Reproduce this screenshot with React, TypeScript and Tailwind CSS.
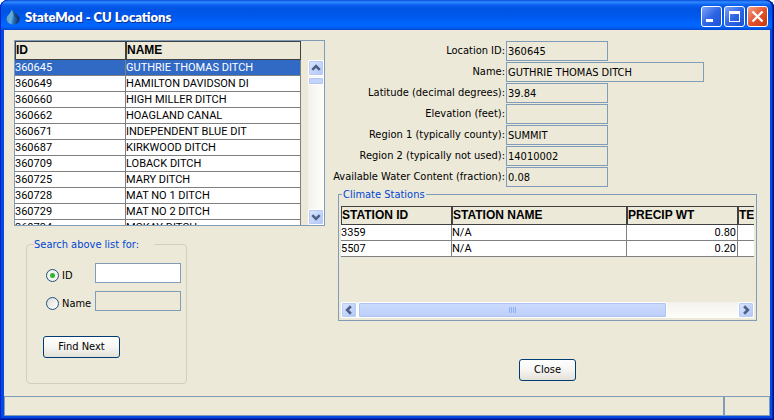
import React from "react";

const locations = [
  ["360645", "GUTHRIE THOMAS DITCH"],
  ["360649", "HAMILTON DAVIDSON DI"],
  ["360660", "HIGH MILLER DITCH"],
  ["360662", "HOAGLAND CANAL"],
  ["360671", "INDEPENDENT BLUE DIT"],
  ["360687", "KIRKWOOD DITCH"],
  ["360709", "LOBACK DITCH"],
  ["360725", "MARY DITCH"],
  ["360728", "MAT NO 1 DITCH"],
  ["360729", "MAT NO 2 DITCH"],
  ["360734", "MCKAY DITCH"],
];

const fields = [
  { id: "location-id", label: "Location ID:", value: "360645", width: "w-[102px]" },
  { id: "name", label: "Name:", value: "GUTHRIE THOMAS DITCH", width: "w-[198px]" },
  { id: "latitude", label: "Latitude (decimal degrees):", value: "39.84", width: "w-[102px]" },
  { id: "elevation", label: "Elevation (feet):", value: "", width: "w-[102px]" },
  { id: "region1", label: "Region 1 (typically county):", value: "SUMMIT", width: "w-[102px]" },
  { id: "region2", label: "Region 2 (typically not used):", value: "14010002", width: "w-[102px]" },
  { id: "awc", label: "Available Water Content (fraction):", value: "0.08", width: "w-[102px]" },
];

const stations = [
  ["3359", "N/A", "0.80"],
  ["5507", "N/A", "0.20"],
];

const arrowPaths = {
  up: "M3.500 9.500 7.500 5.500 11.500 9.500",
  down: "M3.500 5.500 7.500 9.500 11.500 5.500",
  left: "M9.500 3.500 5.500 7.500 9.500 11.500",
  right: "M5.500 3.500 9.500 7.500 5.500 11.500",
};

function ScrollButton({ direction }: { direction: keyof typeof arrowPaths }) {
  return (
    <button
      type="button"
      aria-label={"Scroll " + direction}
      className="size-4 shrink-0 rounded-xs border border-white bg-linear-to-br from-[#dbe5fe] to-[#b0c6f8] shadow-[inset_0_0_0_1px_#b9cbf3]"
    >
      <svg viewBox="0 0 15 15" className="size-[14px]" fill="none" stroke="#4d6185" strokeWidth="2.8">
        <path d={arrowPaths[direction]} />
      </svg>
    </button>
  );
}

function CaptionButton({ label, close, children }: { label: string; close?: boolean; children: React.ReactNode }) {
  return (
    <button
      type="button"
      aria-label={label}
      className={
        "size-[21px] rounded-[3px] border border-white " +
        (close
          ? "bg-linear-to-br from-[#f0a088] via-[#e2532c] to-[#c8360c]"
          : "bg-linear-to-br from-[#7fa2f5] via-[#2f66e6] to-[#1a50d8]")
      }
    >
      <svg viewBox="0 0 19 19" className="size-[19px]" shapeRendering={close ? "auto" : "crispEdges"}>
        {children}
      </svg>
    </button>
  );
}

function PushButton({ className, children }: { className: string; children: React.ReactNode }) {
  return (
    <button
      type="button"
      className={
        "h-[22px] rounded-[3px] border border-[#003c74] bg-linear-to-b from-white via-[#f6f5f1] to-[#e4e1d8] pb-px shadow-[0_0_1px_#ffffff] " +
        className
      }
    >
      {children}
    </button>
  );
}

function HeaderCell({ className, children }: { className?: string; children: React.ReactNode }) {
  return (
    <th
      className={
        "h-[19px] overflow-hidden border border-[#404040] p-0 text-left text-[12px] leading-[17px] font-bold whitespace-nowrap " +
        (className ?? "")
      }
    >
      {children}
    </th>
  );
}

const cell = "h-4 overflow-hidden border-b border-[#808080] p-0 font-['Roboto',sans-serif] text-[11px] leading-[15px] whitespace-nowrap ";
const field = "h-5 border border-[#7f9db9] px-px text-[11px] outline-none ";
const radio =
  "mb-px size-[13px] appearance-none rounded-full border border-[#21507f] bg-linear-to-br from-[#dcdcd7] to-white checked:bg-[radial-gradient(circle,#2fb52f_0_2px,#f2f2ef_3px)]";

export default function App() {
  return (
    <div className="bg-white">
      <div className="flex min-h-screen flex-col rounded-t-lg bg-[#0549e3] font-['DejaVu_Sans_Condensed','DejaVu_Sans',sans-serif] text-[11px] leading-[15px] text-black shadow-[inset_1px_0_#0022cc,inset_-1px_-1px_#00138c,inset_-2px_-2px_#0028b8]">
        <header className="flex h-[30px] shrink-0 items-center gap-[5px] rounded-t-lg bg-[linear-gradient(to_bottom,#0a48d8_0,#2f8cff_2px,#0a5fee_5px,#0054e3_9px,#0058ec_16px,#0066ff_24px,#0064fb_27px,#0046d0_30px)] pt-[3px] pr-[6px] pl-[6px] shadow-[inset_-1px_0_#00138c,inset_-2px_0_#0028b8,inset_1px_0_#0022cc]">
          <svg viewBox="0 0 14 16" className="h-4 w-[14px]">
            <defs>
              <linearGradient id="drop" x1="0" y1="0.3" x2="1" y2="0.5">
                <stop offset="0" stopColor="#6f93b8" />
                <stop offset="0.4" stopColor="#5fb4e4" />
                <stop offset="0.6" stopColor="#2874b8" />
                <stop offset="1" stopColor="#0a2c66" />
              </linearGradient>
            </defs>
            <path d="M5.500 0.500C7 3 13.500 5.500 13.500 10C13.500 13.500 11 15.500 7.500 15.500C3.500 15.500 0.500 13 0.500 9.500C0.500 6.500 5.500 4 5.500 0.500Z" fill="url(#drop)" />
            <path d="M5.500 0.500C7 3 13.500 5.500 13.500 10L9 8Z" fill="#15305e" opacity="0.6" />
          </svg>
          <h1 className="flex-1 font-['Lato','Noto_Sans',sans-serif] text-[13px] leading-4 font-extrabold text-white [text-shadow:1px_1px_#0a2f90]">
            StateMod - CU Locations
          </h1>
          <div className="flex gap-[2px]">
            <CaptionButton label="Minimize">
              <path d="M4 12h7v3H4z" fill="#fff" />
            </CaptionButton>
            <CaptionButton label="Maximize">
              <path d="M4 4h11v11H4zM5 7v7h9V7z" fill="#fff" fillRule="evenodd" />
            </CaptionButton>
            <CaptionButton label="Close window" close>
              <path d="M4.500 4.500l10 10M14.500 4.500l-10 10" stroke="#fff" strokeWidth="2.4" />
            </CaptionButton>
          </div>
        </header>

        <div className="mx-1 mb-1 flex flex-1 flex-col bg-[#ece9d8]">
          <main className="flex flex-1 gap-[9px] pt-[10px] pr-[13px] pb-3 pl-[10px]">
            <section className="w-[311px] shrink-0">
              <div className="flex h-[186px] justify-between overflow-hidden border border-[#7f9db9]">
                <div className="overflow-hidden">
                  <table className="w-[286px] table-fixed border-separate border-spacing-0 font-['Liberation_Sans',Arial,sans-serif]">
                    <thead>
                      <tr>
                        <HeaderCell className="w-[111px]">ID</HeaderCell>
                        <HeaderCell>NAME</HeaderCell>
                      </tr>
                    </thead>
                    <tbody>
                      {locations.map(([id, name], i) => (
                        <tr key={id} className={i === 0 ? "bg-[#316ac5] text-white" : "bg-white"}>
                          <td className={cell + "border-r"}>{id}</td>
                          <td className={cell + "border-r"}>{name}</td>
                        </tr>
                      ))}
                    </tbody>
                  </table>
                </div>
                <div className="mt-[19px] flex w-4 flex-col bg-linear-to-r from-[#f3f1ec] to-[#fefefb]">
                  <ScrollButton direction="up" />
                  <div className="mt-px h-2 rounded-xs border border-white bg-[#c4d4fc] shadow-[inset_0_0_0_1px_#b0c4f4]" />
                  <div className="flex-1" />
                  <ScrollButton direction="down" />
                </div>
              </div>

              <fieldset className="mt-[11px] ml-3 h-[147px] w-[161px] rounded border border-[#d0d0bf] pr-[5px] pl-4">
                <legend className="-ml-[9px] h-[15px] w-[120px] text-[#0046d5]">Search above list for:</legend>
                <div className="mt-[11px] flex items-end pl-[3px]">
                  <input type="radio" id="by-id" name="search-by" defaultChecked className={radio} />
                  <label htmlFor="by-id" className="w-9 pl-[3px]">ID</label>
                  <input type="text" aria-label="ID to find" className={field + "ml-auto w-[86px] bg-white"} />
                </div>
                <div className="mt-2 flex items-end pl-[3px]">
                  <input type="radio" id="by-name" name="search-by" className={radio} />
                  <label htmlFor="by-name" className="w-9 pl-[3px]">Name</label>
                  <input type="text" aria-label="Name to find" disabled className={field + "ml-auto w-[86px]"} />
                </div>
                <PushButton className="mt-[25px] w-[77px]">Find Next</PushButton>
              </fieldset>
            </section>

            <section className="min-w-0 flex-1 pt-px">
              <div className="flex flex-col gap-px">
                {fields.map((f) => (
                  <div key={f.id} className="flex items-center">
                    <label htmlFor={f.id} className="flex w-[172px] justify-end pr-px pb-px whitespace-nowrap">
                      {f.label}
                    </label>
                    <input id={f.id} type="text" readOnly defaultValue={f.value} className={field + f.width} />
                  </div>
                ))}
              </div>

              <fieldset className="ml-1 min-w-0 border border-[#7f9db9] px-[2px] pb-[2px]">
                <legend className="ml-px h-[15px] px-px text-[#0046d5]">Climate Stations</legend>
                <div className="mt-1 h-24 overflow-hidden">
                  <table className="w-[508px] table-fixed border-separate border-spacing-0 font-['Liberation_Sans',Arial,sans-serif]">
                    <thead>
                      <tr>
                        <HeaderCell className="w-[111px]">STATION ID</HeaderCell>
                        <HeaderCell className="w-[175px]">STATION NAME</HeaderCell>
                        <HeaderCell className="w-[111px]">PRECIP WT</HeaderCell>
                        <HeaderCell className="w-[111px]">TEMP WT</HeaderCell>
                      </tr>
                    </thead>
                    <tbody>
                      {stations.map(([id, name, weight]) => (
                        <tr key={id} className="bg-white">
                          <td className={cell + "border-r"}>{id}</td>
                          <td className={cell + "border-r"}>{name}</td>
                          <td className={cell + "border-r pr-px text-right"}>{weight}</td>
                          <td className={cell} />
                        </tr>
                      ))}
                    </tbody>
                  </table>
                </div>
                <div className="flex h-4 bg-linear-to-b from-[#f3f1ec] to-[#fefefb]">
                  <ScrollButton direction="left" />
                  <div className="flex-1">
                    <div className="ml-px flex h-4 w-[81%] items-center justify-center gap-px rounded-xs border border-white bg-linear-to-b from-[#cbdafe] to-[#bccffa] shadow-[inset_0_0_0_1px_#b0c4f4]">
                      <i className="h-[6px] w-px bg-[#8cb0f8]" />
                      <i className="h-[6px] w-px bg-[#8cb0f8]" />
                      <i className="h-[6px] w-px bg-[#8cb0f8]" />
                      <i className="h-[6px] w-px bg-[#8cb0f8]" />
                    </div>
                  </div>
                  <ScrollButton direction="right" />
                </div>
              </fieldset>

              <div className="mt-[38px] ml-1 flex justify-center">
                <PushButton className="w-[57px]">Close</PushButton>
              </div>
            </section>
          </main>

          <footer className="flex h-5 shrink-0">
            <div className="flex-1 border border-[#7f9db9]" />
            <div className="w-[46px] border border-[#7f9db9]" />
          </footer>
        </div>
      </div>
    </div>
  );
}
